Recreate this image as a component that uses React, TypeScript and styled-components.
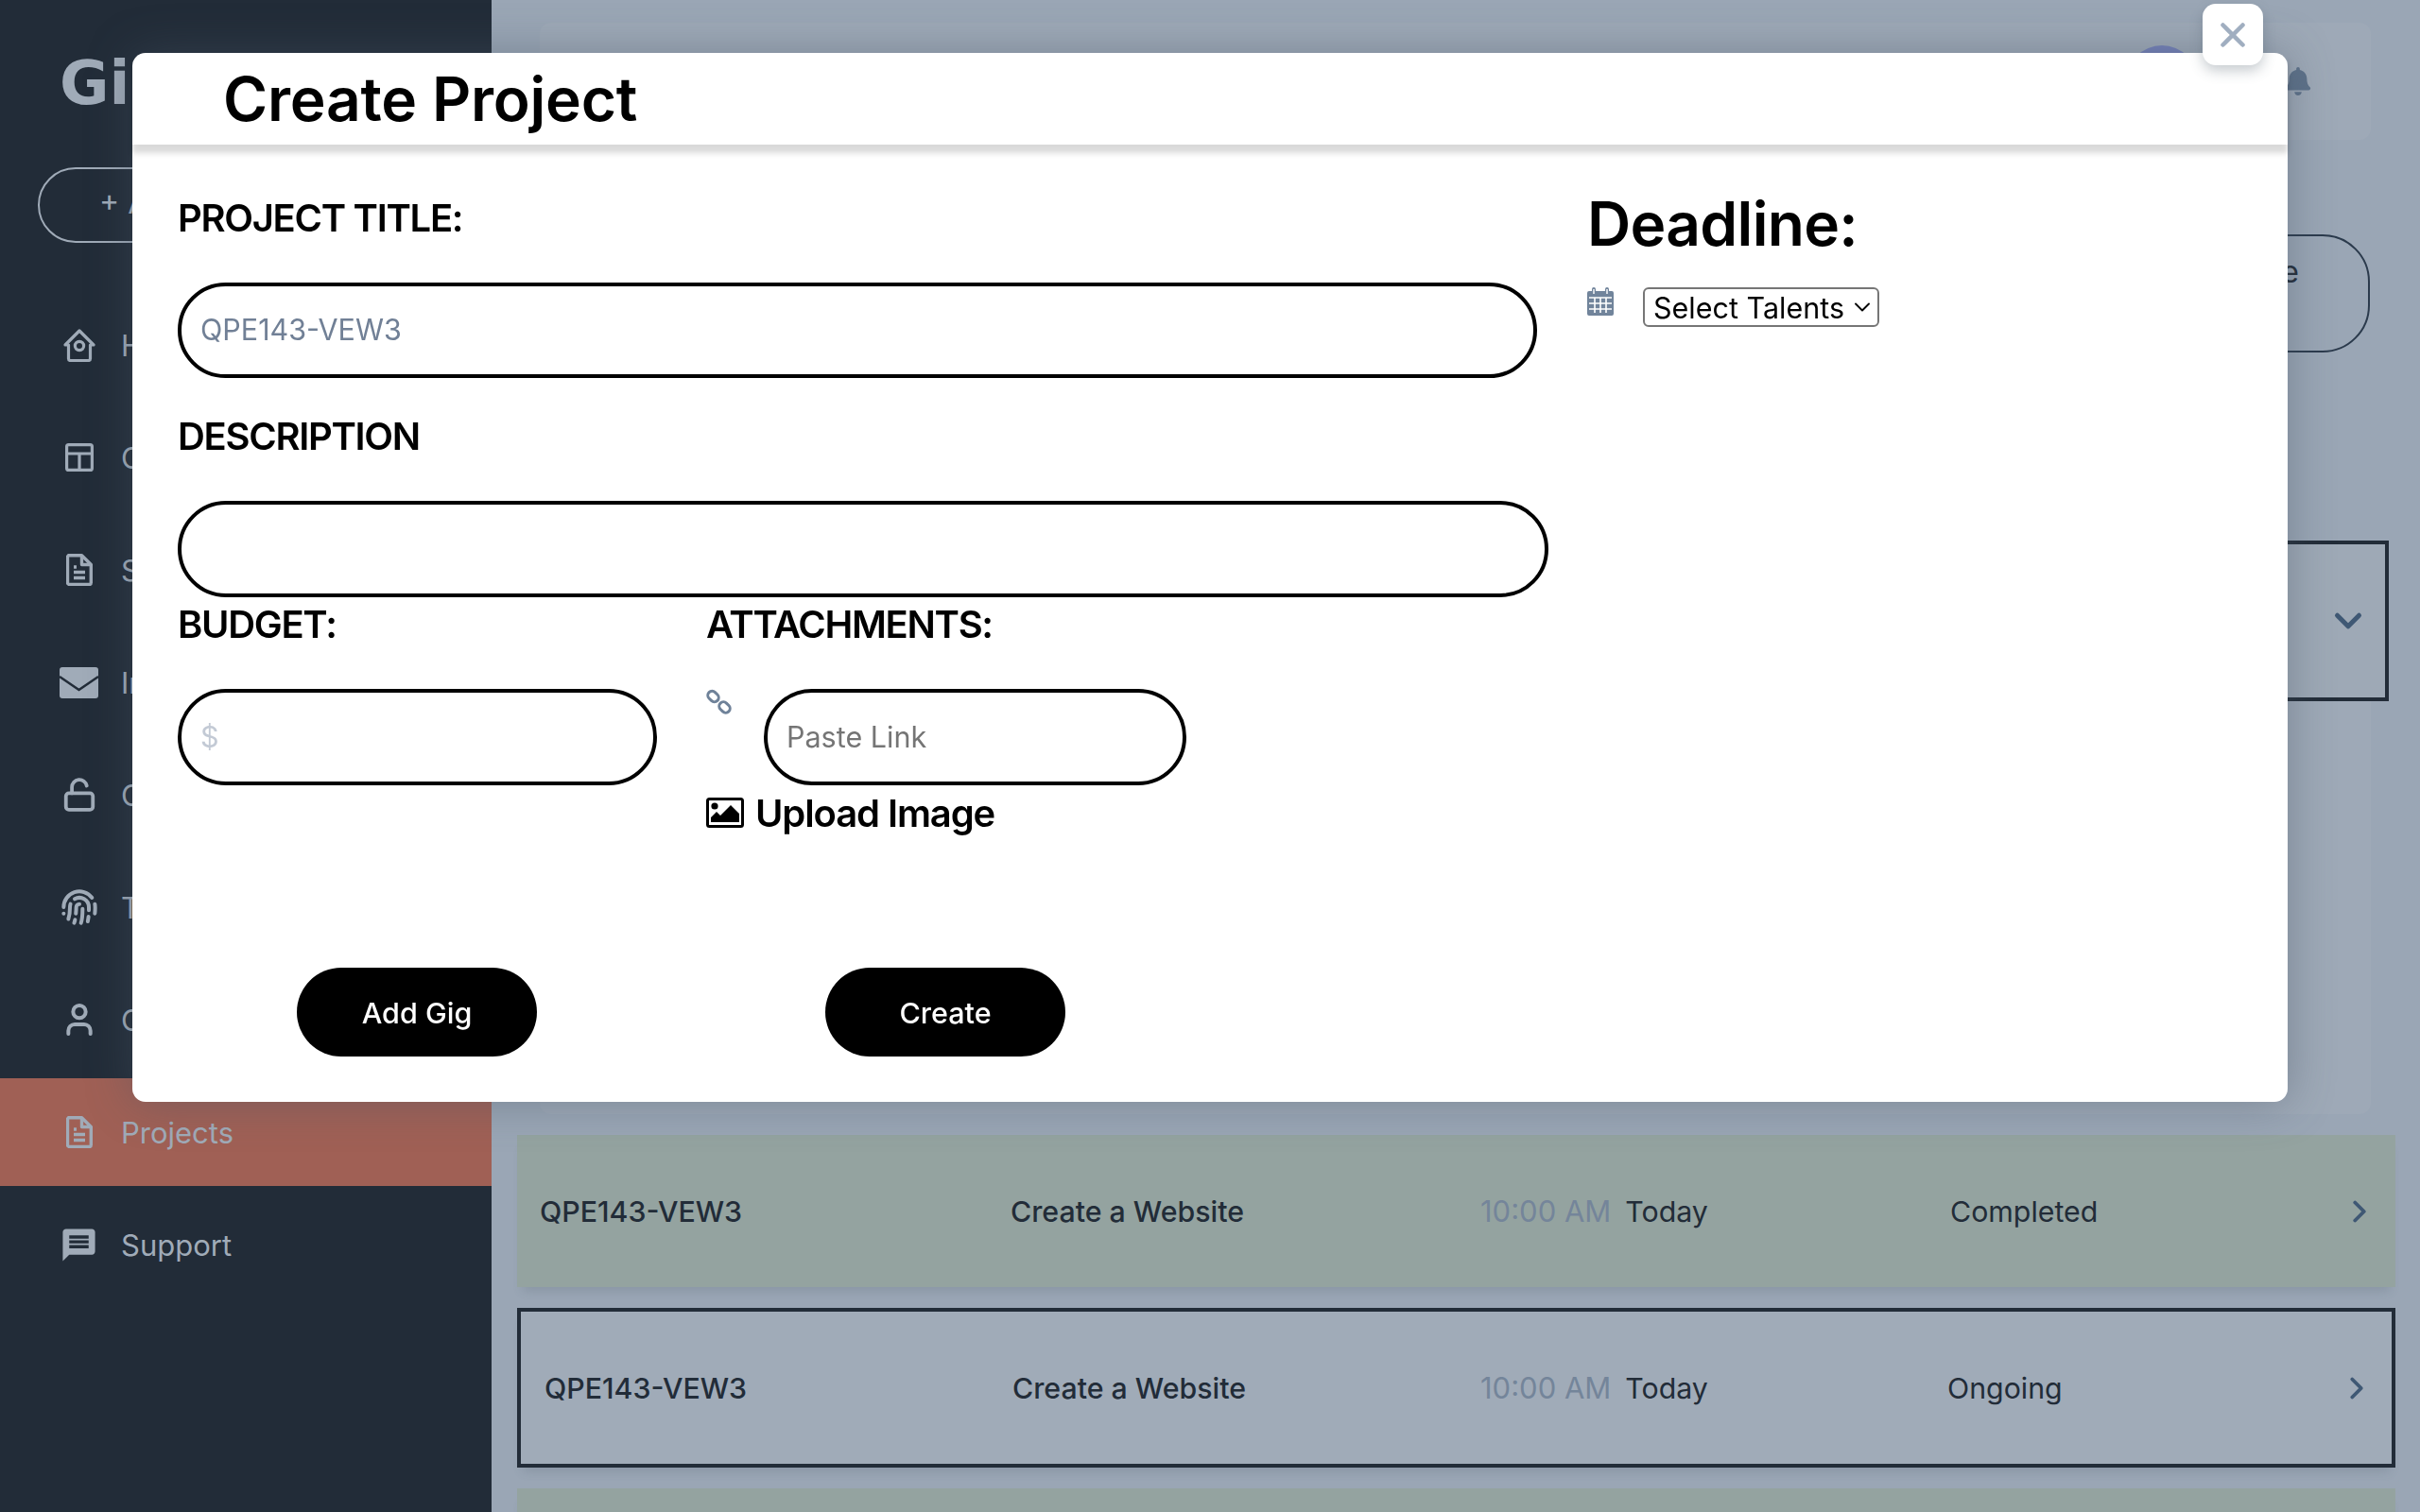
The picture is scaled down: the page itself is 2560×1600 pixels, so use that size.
import React from 'react'
import styled, { createGlobalStyle } from 'styled-components'
import { ChevronDown, ChevronRight, Fingerprint, LockOpen, User, X } from 'lucide-react'
import { FaBell } from 'react-icons/fa'
import { MdMessage } from 'react-icons/md'

const HomeIcon = () => (
  <svg width="34" height="35" viewBox="0 0 34 35" fill="none" stroke="currentColor" strokeWidth="3.2" strokeLinejoin="round">
    <path d="M2 17 17 2l15 15h-3.5v14.5a2 2 0 0 1-2 2h-19a2 2 0 0 1-2-2V17z" />
    <circle cx="17" cy="18" r="4.6" />
  </svg>
)

const LayoutIcon = () => (
  <svg width="30" height="30" viewBox="0 0 30 30" fill="none" stroke="currentColor" strokeWidth="3.2" strokeLinejoin="round">
    <rect x="1.6" y="1.6" width="26.8" height="26.8" rx="2" />
    <path d="M1.6 11h26.8M15 11v17.4" />
  </svg>
)

const FileIcon = () => (
  <svg width="28" height="34" viewBox="0 0 28 34" fill="none" stroke="currentColor" strokeWidth="3.4" strokeLinejoin="round">
    <path d="M3.5 1.7h13l9.8 9.8v19a2 2 0 0 1-2 2H3.5a2 2 0 0 1-2-2v-27a2 2 0 0 1 2-2z" />
    <path d="M16.5 1.7v9.8h9.8M8 14h3M8 19.5h12M8 25.5h12" />
  </svg>
)

const MailIcon = () => (
  <svg width="41" height="33" viewBox="0 0 41 33">
    <rect width="41" height="33" rx="3" fill="currentColor" />
    <path d="M0 10 20.5 24 41 10" fill="none" stroke="#222c38" strokeWidth="2.5" />
  </svg>
)

const LinkIcon = () => (
  <svg width="28" height="28" viewBox="0 0 28 28" fill="none" stroke="#6f8299" strokeWidth="3">
    <rect x="1.25" y="3.5" width="12.5" height="9" rx="4.5" transform="rotate(45 7.5 8)" />
    <rect x="13.25" y="15" width="12.5" height="9" rx="4.5" transform="rotate(45 19.5 19.5)" />
  </svg>
)

const ImageIcon = () => (
  <svg width="40" height="32" viewBox="0 0 40 32">
    <rect x="1.5" y="1.5" width="37" height="29" rx="2" fill="#fff" stroke="#000" strokeWidth="3" />
    <circle cx="9" cy="9" r="3.6" />
    <path d="M5 26v-5l6-6 4 4 11-11 9 9v9z" />
  </svg>
)

const CalendarIcon = () => (
  <svg width="28" height="30" viewBox="0 0 28 30">
    <path fill="#71849b" d="M2 4h3V2a2 2 0 0 1 4 0v2h10V2a2 2 0 0 1 4 0v2h3a2 2 0 0 1 2 2v22a2 2 0 0 1-2 2H2a2 2 0 0 1-2-2V6a2 2 0 0 1 2-2z" />
    <path stroke="#fff" strokeWidth="1.6" d="M2 11h24M2 17h24M2 23h24M8 11v16M14 11v16M20 11v16" />
    <path stroke="#fff" strokeWidth="1.4" fill="none" d="M7 2v5M21 2v5" />
  </svg>
)

const navItems = [
  { label: 'Home', icon: <HomeIcon /> },
  { label: 'Categories', icon: <LayoutIcon /> },
  { label: 'Services', icon: <FileIcon /> },
  { label: 'Inbox', icon: <MailIcon /> },
  { label: 'Change Password', icon: <LockOpen size={38} strokeWidth={2.4} /> },
  { label: 'Two-Factor', icon: <Fingerprint size={40} strokeWidth={2.4} /> },
  { label: 'Clients', icon: <User size={40} strokeWidth={2.4} /> },
  { label: 'Projects', icon: <FileIcon />, active: true },
  { label: 'Support', icon: <MdMessage size={41} /> },
]

const rows = [
  { status: 'Completed', done: true },
  { status: 'Ongoing', done: false },
  { status: 'Completed', done: true },
]

export default function App() {
  return (
    <Page>
      <GlobalStyle />
      <Sidebar>
        <Logo>Gig</Logo>
        <AddButton>+ Add Project</AddButton>
        <Nav>
          {navItems.map((item) => (
            <NavItem key={item.label} $active={item.active}>
              <NavIcon>{item.icon}</NavIcon>
              {item.label}
            </NavItem>
          ))}
        </Nav>
      </Sidebar>

      <Main>
        <TopBar>
          <Avatar />
          <Bell>
            <FaBell size={30} />
          </Bell>
        </TopBar>
        <Actions>
          <OutlineButton>Create</OutlineButton>
        </Actions>
        <OpenRow>
          <ChevronDown size={46} strokeWidth={2.6} color="#3f5874" />
        </OpenRow>
        <Details />
        <Rows>
          {rows.map((row, i) => (
            <Row key={i} $done={row.done}>
              <RowId>QPE143-VEW3</RowId>
              <RowId>Create a Website</RowId>
              <span>
                <Time>10:00 AM</Time>
                Today
              </span>
              <span>{row.status}</span>
              <ChevronRight size={38} strokeWidth={2.4} color="#3f5874" />
            </Row>
          ))}
        </Rows>
      </Main>

      <Modal>
        <CloseButton>
          <X size={42} strokeWidth={2.6} />
        </CloseButton>
        <ModalHeader>Create Project</ModalHeader>
        <ModalBody>
          <Form>
            <Label>PROJECT TITLE:</Label>
            <Input $width={1438} placeholder="QPE143-VEW3" $hint="#718096" />
            <Label $top={38}>DESCRIPTION</Label>
            <Input $width={1450} $height={102} />
            <Columns>
              <div>
                <Label $top={5}>BUDGET:</Label>
                <Input $width={507} $height={102} placeholder="$" $hint="#c3cad5" />
              </div>
              <div>
                <Label $top={5}>ATTACHMENTS:</Label>
                <LinkRow>
                  <LinkIcon />
                  <Input $width={447} $height={102} placeholder="Paste Link" $hint="#757575" />
                </LinkRow>
                <Upload>
                  <ImageIcon />
                  Upload Image
                </Upload>
              </div>
            </Columns>
            <Buttons>
              <PrimaryButton>Add Gig</PrimaryButton>
              <PrimaryButton>Create</PrimaryButton>
            </Buttons>
          </Form>
          <Aside>
            <Heading>Deadline:</Heading>
            <DeadlineRow>
              <CalendarIcon />
              <Select>
                Select Talents
                <ChevronDown size={28} strokeWidth={1.6} />
              </Select>
            </DeadlineRow>
          </Aside>
        </ModalBody>
      </Modal>
    </Page>
  )
}

const GlobalStyle = createGlobalStyle`
  html, body {
    margin: 0;
    height: 100%;
    overflow: hidden;
  }
  body {
    font-family: Inter, "Noto Sans", sans-serif;
  }
  * {
    box-sizing: border-box;
  }
`

const Page = styled.div`
  display: flex;
  width: 2560px;
  height: 1600px;
  overflow: hidden;
  background: #9aa6b5;
  color: #222c38;
`

const Sidebar = styled.aside`
  flex: 0 0 520px;
  background: #222c38;
  color: #a0abb8;
`

const Logo = styled.div`
  height: 177px;
  padding: 44px 0 0 63px;
  font-family: "DejaVu Sans", sans-serif;
  font-size: 64px;
  line-height: 88px;
  font-weight: 700;
`

const AddButton = styled.div`
  display: flex;
  align-items: center;
  width: 440px;
  height: 80px;
  margin: 0 0 51px 40px;
  padding: 0 0 5px 63px;
  border: 2px solid #a0abb8;
  border-radius: 40px;
  font-size: 32px;
  white-space: nowrap;
`

const Nav = styled.nav`
  display: flex;
  flex-direction: column;
  gap: 5px;
`

const NavItem = styled.div<{ $active?: boolean }>`
  display: flex;
  align-items: center;
  height: 114px;
  padding-left: 63px;
  font-size: 31px;
  white-space: nowrap;
  background: ${(p) => (p.$active ? '#a06055' : 'transparent')};
`

const NavIcon = styled.span`
  display: flex;
  align-items: center;
  justify-content: center;
  width: 41px;
  margin-right: 24px;
`

const Main = styled.main`
  flex: 1;
  min-width: 0;
`

const TopBar = styled.div`
  display: flex;
  align-items: center;
  justify-content: flex-end;
  gap: 91px;
  height: 124px;
  margin: 24px 52px 0 51px;
  padding-right: 62px;
  border-radius: 12px;
  background: #9ea9b7;
`

const Avatar = styled.div`
  width: 76px;
  height: 76px;
  border-radius: 50%;
  background: #7480b8;
`

const Bell = styled.span`
  display: flex;
  color: #5d7189;
`

const Actions = styled.div`
  display: flex;
  justify-content: flex-end;
  margin: 100px 53px 0 0;
`

const OutlineButton = styled.div`
  display: flex;
  align-items: center;
  justify-content: flex-end;
  width: 320px;
  height: 125px;
  padding: 0 73px 46px 0;
  border: 2px solid #2b3a4c;
  border-radius: 50px;
  font-size: 32px;
`

const OpenRow = styled.div`
  display: flex;
  align-items: center;
  justify-content: flex-end;
  height: 170px;
  margin: 199px 33px 0 27px;
  padding-right: 16px;
  border: 4px solid #222c38;
  background: #9ea9b6;
`

const Details = styled.div`
  height: 437px;
  margin: 0 52px 0 51px;
  border-radius: 0 0 12px 12px;
  background: #9ea9b7;
`

const Rows = styled.div`
  display: flex;
  flex-direction: column;
  gap: 22px;
  margin: 22px 26px 0 27px;
`

const Row = styled.div<{ $done: boolean }>`
  display: grid;
  grid-template-columns: ${(p) => (p.$done ? '498px 497px 497px 1fr 38px' : '495px 495px 494px 1fr 38px')};
  align-items: center;
  flex: 0 0 ${(p) => (p.$done ? '161px' : '169px')};
  padding: ${(p) => (p.$done ? '0 19px 0 24px' : '0 18px 0 25px')};
  border: ${(p) => (p.$done ? 'none' : '4px solid #222c38')};
  background: ${(p) => (p.$done ? '#94a3a0' : '#a0abb8')};
  box-shadow: 0 10px 10px -6px rgba(70, 85, 100, 0.2);
  font-size: 30.3px;
`

const RowId = styled.span`
  font-weight: 500;
`

const Time = styled.span`
  margin-right: 15px;
  font-size: 31px;
  color: #74859a;
`

const Modal = styled.div`
  position: fixed;
  top: 56px;
  left: 140px;
  display: flex;
  flex-direction: column;
  width: 2280px;
  height: 1110px;
  border-radius: 14px;
  background: #fff;
  color: #000;
  box-shadow: 0 0 48px rgba(70, 85, 100, 0.44);
`

const CloseButton = styled.div`
  position: absolute;
  top: -52px;
  right: 26px;
  display: flex;
  align-items: center;
  justify-content: center;
  width: 64px;
  height: 65px;
  border-radius: 14px;
  background: #fff;
  color: #a0aec0;
  box-shadow: 0 6px 14px rgba(70, 85, 100, 0.3);
`

const ModalHeader = styled.h2`
  display: flex;
  align-items: center;
  flex: 0 0 97px;
  margin: 0;
  padding-left: 96px;
  font-size: 64px;
  font-weight: 600;
  letter-spacing: -0.2px;
  box-shadow: 0 9px 6px rgba(0, 0, 0, 0.15);
`

const ModalBody = styled.div`
  display: flex;
  gap: 41px;
  padding-left: 48px;
`

const Form = styled.div`
  flex: 0 0 1450px;
  padding-top: 54px;
`

const Label = styled.div<{ $top?: number }>`
  margin: ${(p) => p.$top ?? 0}px 0 44px;
  font-size: 40px;
  line-height: 48px;
  font-weight: 600;
  letter-spacing: -1.3px;
`

const Input = styled.input<{ $width: number; $height?: number; $hint?: string }>`
  display: block;
  width: ${(p) => p.$width}px;
  height: ${(p) => p.$height ?? 101}px;
  padding: 0 20px 2px;
  border: 4px solid #000;
  border-radius: 51px;
  outline: none;
  background: #fff;
  font-family: inherit;
  font-size: 30.5px;

  &::placeholder {
    color: ${(p) => p.$hint ?? '#757575'};
    opacity: 1;
  }
`

const Columns = styled.div`
  display: flex;
  gap: 52px;
`

const LinkRow = styled.div`
  display: flex;
  gap: 33px;
`

const Upload = styled.div`
  display: flex;
  align-items: center;
  gap: 12px;
  height: 48px;
  margin-top: 5px;
  font-size: 40px;
  font-weight: 600;
  letter-spacing: -1.1px;
`

const Buttons = styled.div`
  display: flex;
  gap: 305px;
  margin: 140px 0 0 126px;
`

const PrimaryButton = styled.button`
  width: 254px;
  height: 94px;
  border: none;
  border-radius: 47px;
  background: #000;
  color: #fff;
  font-family: inherit;
  font-size: 30.5px;
  font-weight: 500;
`

const Aside = styled.div`
  padding-top: 45px;
`

const Heading = styled.h3`
  margin: 0 0 28px;
  font-size: 64px;
  line-height: 78px;
  font-weight: 600;
  letter-spacing: -0.7px;
`

const DeadlineRow = styled.div`
  display: flex;
  align-items: flex-start;
  gap: 32px;
`

const Select = styled.div`
  display: flex;
  align-items: center;
  justify-content: space-between;
  width: 250px;
  height: 42px;
  margin-left: -1px;
  padding: 0 2px 0 9px;
  border: 2px solid #767676;
  border-radius: 6px;
  font-size: 30.5px;
  white-space: nowrap;
`
